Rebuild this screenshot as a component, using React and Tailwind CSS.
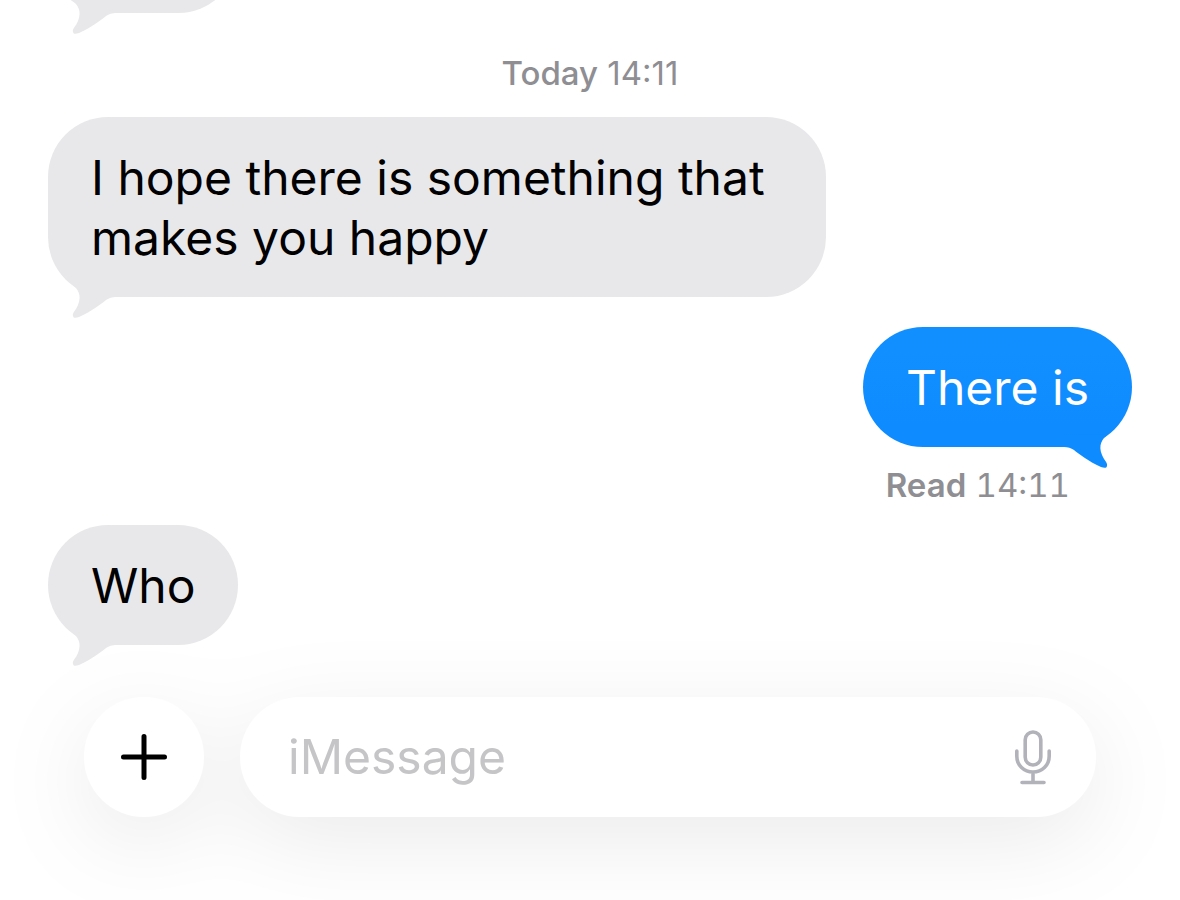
import { useState } from "react";
import clsx from "clsx";

function Tail({ sent }) {
  return (
    <svg
      viewBox="0 0 72 36"
      aria-hidden="true"
      className={clsx(
        "absolute top-full -mt-3.5 h-9 w-18",
        sent ? "right-0 -scale-x-100 text-[#0d8bff]" : "left-0 text-[#e8e8ea]"
      )}
    >
      <path
        fill="currentColor"
        d="M24 1C30 6 34 12 30 22C28 27 24 30 25 33C25.500 35.500 28 35 31 34C44 28 53 21 58 17C61 15 64 14 68 14L68 2L27 1Z"
      />
    </svg>
  );
}

function Bubble({ sent, className, children }) {
  return (
    <div
      className={clsx(
        "relative min-h-[120px] max-w-[778px] rounded-[60px] px-[43px] pt-[31px] pb-[29px] text-[48px] leading-[60px]",
        sent ? "self-end bg-linear-to-b from-[#128fff] to-[#0d8bff] text-white" : "self-start bg-[#e8e8ea] text-black",
        className
      )}
    >
      {children}
      <Tail sent={sent} />
    </div>
  );
}

function MicIcon() {
  return (
    <svg viewBox="0 0 38 56" fill="none" stroke="currentColor" strokeWidth="3.6" strokeLinecap="round" className="h-14 w-[38px]">
      <rect x="11.200" y="3" width="15.600" height="33" rx="7.800" />
      <path d="M2.800 22V27C2.800 36.500 10 43 19 43S35.200 36.500 35.200 27V22M19 43V53.500M8 53.500H30" />
    </svg>
  );
}

function Composer() {
  const [text, setText] = useState("");

  return (
    <form
      className="relative flex gap-9 px-9 drop-shadow-[0_24px_44px_rgba(0,0,0,0.08)]"
      onSubmit={(e) => e.preventDefault()}
    >
      <button
        type="button"
        aria-label="Add"
        className="flex size-[120px] shrink-0 items-center justify-center rounded-full bg-white"
      >
        <svg viewBox="0 0 46 46" stroke="black" strokeWidth="5" strokeLinecap="round" className="size-[46px]">
          <path d="M23 2.500V43.500M2.500 23H43.500" />
        </svg>
      </button>
      <div className="flex h-[120px] min-w-0 flex-1 items-center rounded-full bg-white pr-11 pl-12">
        <input
          type="text"
          aria-label="iMessage"
          placeholder="iMessage"
          value={text}
          onChange={(e) => setText(e.target.value)}
          className="min-w-0 flex-1 bg-transparent text-[48px] leading-[60px] text-black outline-none placeholder:text-[#c5c5c7]"
        />
        <button type="button" aria-label="Dictate" className="text-[#b2b3ba]">
          <MicIcon />
        </button>
      </div>
    </form>
  );
}

export default function App() {
  return (
    <main className="flex h-screen flex-col justify-end overflow-hidden bg-white px-12 pb-[83px] font-['Inter',sans-serif]">
      <div className="flex shrink-0 flex-col pb-[52px]">
        <Bubble className="w-[190px]" />
        <p className="mt-10 text-center text-[33px] leading-10 text-[#8e8e93]">
          <span className="font-medium">Today</span> 14:11
        </p>
        <Bubble className="mt-6">I hope there is something that makes you happy</Bubble>
        <Bubble sent className="mt-[30px]">
          There is
        </Bubble>
        <p className="mt-[18px] mr-[62px] self-end text-[33px] leading-10 text-[#8e8e93]">
          <span className="font-semibold">Read</span> <span className="tabular-nums">14:11</span>
        </p>
        <Bubble className="mt-5">Who</Bubble>
      </div>
      <Composer />
    </main>
  );
}
